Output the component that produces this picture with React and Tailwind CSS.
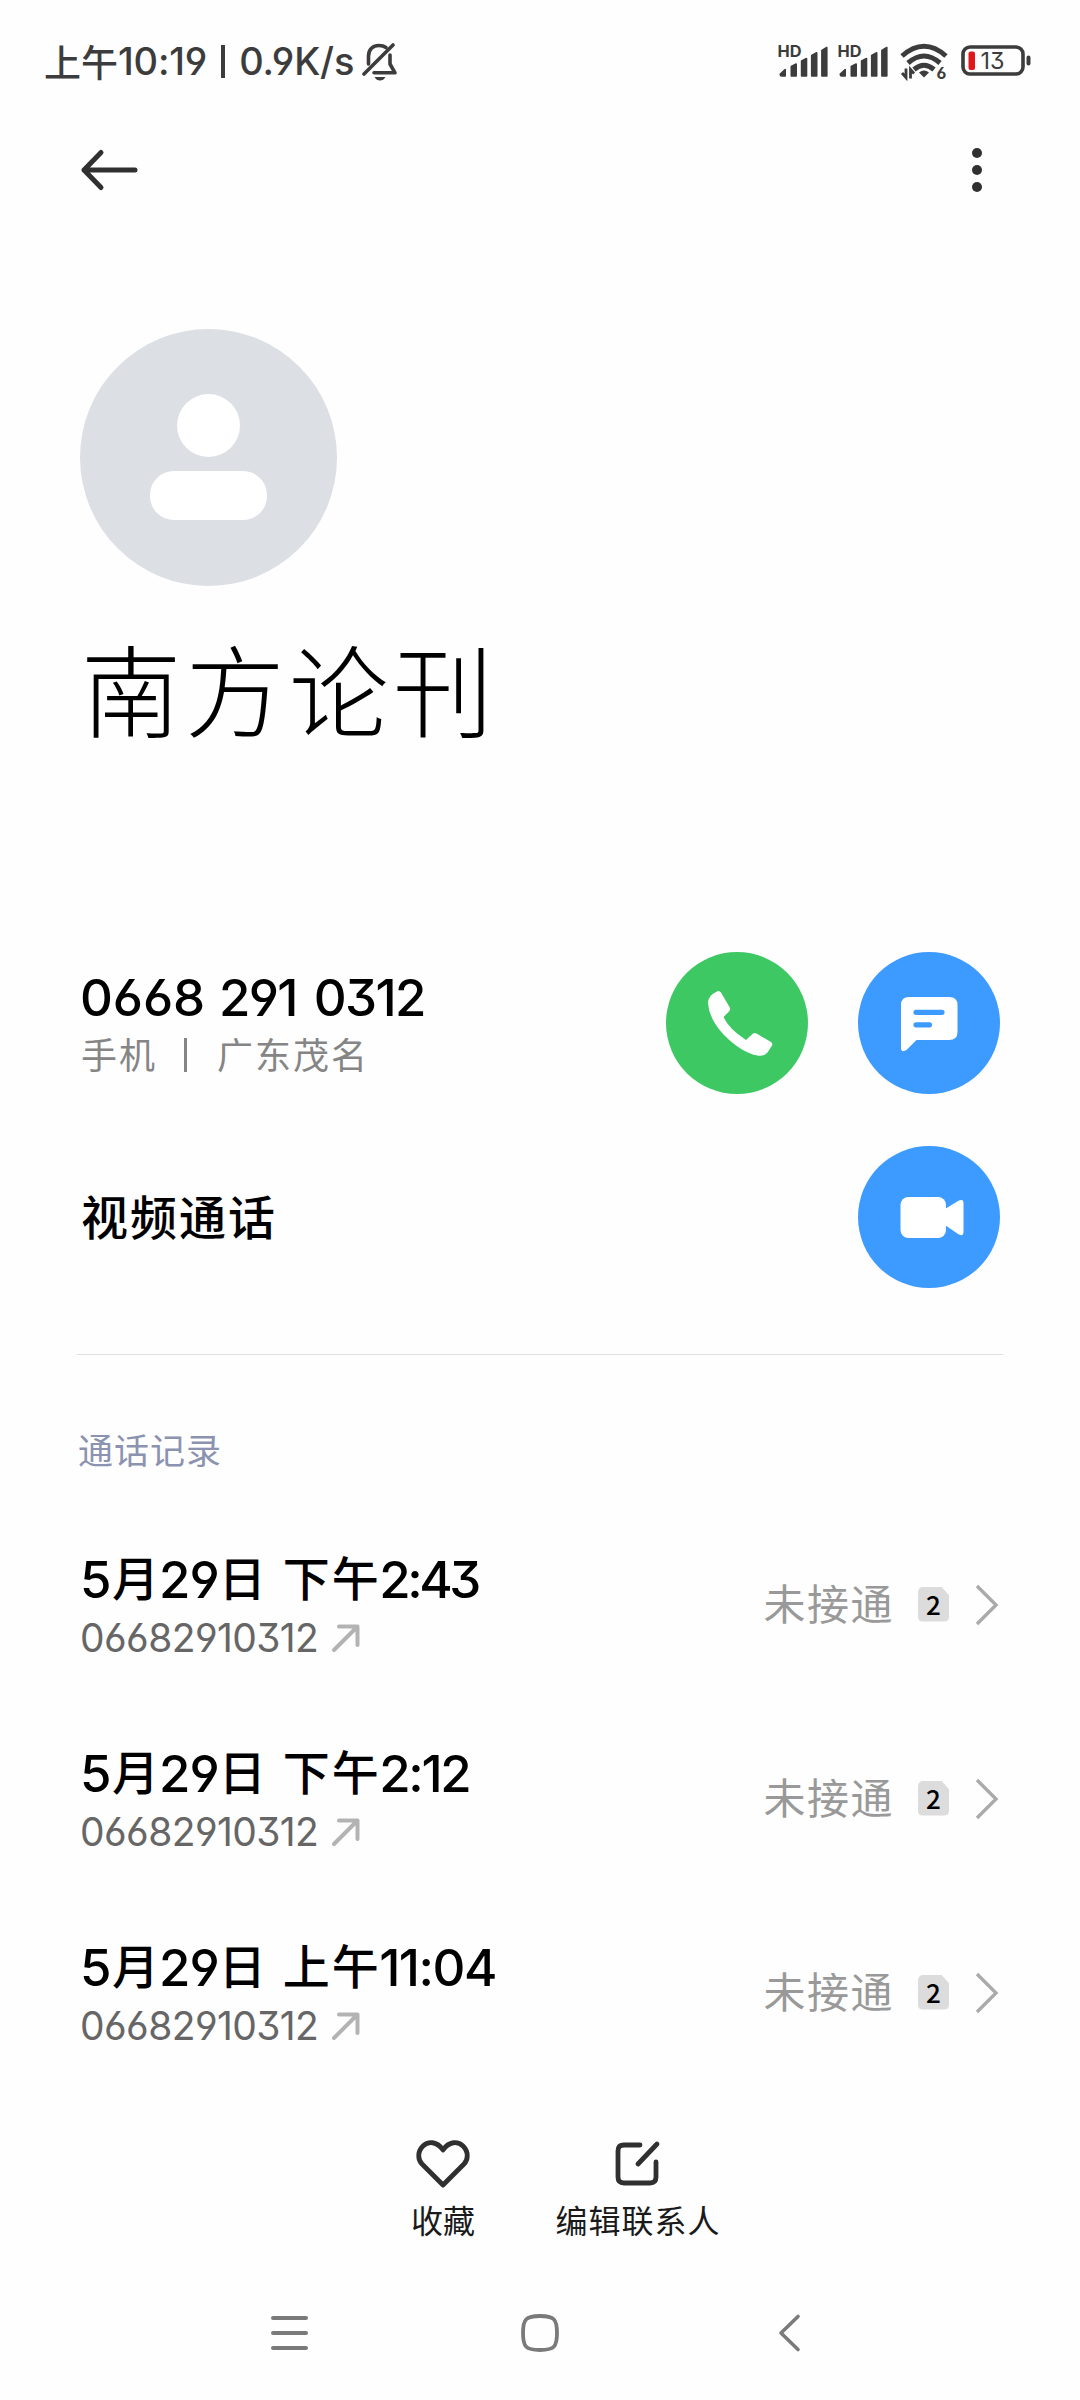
import React from "react";

const CJK = "font-['Noto_Sans_CJK_SC',sans-serif]";
const NUM = "font-['Inter','Noto_Sans_CJK_SC',sans-serif] [font-feature-settings:'cv03','cv04','cv09']";

const calls = [
  { period: "下午", time: "2:43", spacing: "tracking-[-3.400px]" },
  { period: "下午", time: "2:12", spacing: "tracking-[-2.300px]" },
  { period: "上午", time: "11:04", spacing: "tracking-[-1.500px]" },
];

function Signal() {
  return (
    <svg className="overflow-visible" width="52" height="34" viewBox="0 0 52 34" fill="#3c3c3c" stroke="#3c3c3c" strokeWidth="1.600" strokeLinejoin="round">
      <text x="-0.500" y="12.800" fontSize="15.500" fontWeight="700" fontFamily="Inter, sans-serif" textLength="24" lengthAdjust="spacingAndGlyphs" stroke="none">HD</text>
      <path d="M2.300 30 L7.200 25.500 V32 H3.500 Q2.300 32 2.300 30Z" />
      <path d="M13.300 22.500 L18.200 20 V32 H13.300Z" />
      <path d="M23.600 17 L28.500 14.500 V32 H23.600Z" />
      <path d="M33.700 11.500 L38.700 8.800 V32 H33.700Z" />
      <path d="M43.900 6.500 L48.800 3.500 V32 H43.900Z" />
    </svg>
  );
}

function StatusBar() {
  return (
    <header className="flex h-[122px] items-center justify-between pl-[44px] pr-[49px] text-[#3c3c3c]">
      <div className="flex h-[46px] items-center whitespace-nowrap leading-none">
        <span className={`${CJK} text-[37px] font-medium`}>上午</span>
        <span className={`${NUM} text-[38px] font-medium tracking-[-0.200px]`}>10:19</span>
        <span className="ml-[14px] mr-[14px] h-[33px] w-[4px] bg-[#3c3c3c]" />
        <span className={`${NUM} text-[38px] font-medium tracking-[-0.200px]`}>0.9K/s</span>
        <svg className="ml-[8px]" width="36" height="40" viewBox="0 0 36 40" fill="none" stroke="#3c3c3c" strokeWidth="3.600" strokeLinecap="round" strokeLinejoin="round">
          <path d="M2 33 L31 4" />
          <path d="M6.500 23 V15 C6.500 8.500 11 4.500 17 4.500 C20 4.500 22 5 24 6.500" />
          <path d="M28 14 V23 L33 31.800 H12" />
          <path d="M12.500 36 H23.500 Q21.500 39.500 18 39.500 Q14.500 39.500 12.500 36Z" fill="#3c3c3c" stroke="none" />
        </svg>
      </div>
      <div className="flex items-center">
        <Signal />
        <div className="ml-[8px]"><Signal /></div>
        <svg className="ml-[10px] overflow-visible" width="50" height="38" viewBox="0 0 50 38" fill="none" stroke="#3c3c3c" strokeWidth="5">
          <path d="M2 14 Q24 -5.500 46 14" />
          <path d="M8 21 Q24 7 40 21" />
          <path d="M14 27.500 Q24 19 34 27.500" />
          <path d="M19 30.500 Q24 26.500 29 30.500 L24 35.500Z" fill="#3c3c3c" stroke="none" />
          <path d="M6 26.500 V35.500 L2 31 M10.500 36.500 V27.500 L14 31.500" strokeWidth="2.800" />
          <text x="36.500" y="36.500" fontSize="16" fontWeight="700" fontFamily="Inter, sans-serif" fill="#3c3c3c" stroke="none" style={{ fontFeatureSettings: "'cv03'" }}>6</text>
        </svg>
        <svg className="ml-[11px]" width="70" height="32" viewBox="0 0 70 32" fill="none">
          <rect x="2" y="2" width="60" height="27" rx="7" stroke="#3c3c3c" strokeWidth="3.600" />
          <rect x="7.500" y="6.500" width="6.500" height="18.500" rx="2" fill="#e0161b" />
          <rect x="65.500" y="10.500" width="4" height="10" rx="2" fill="#3c3c3c" />
          <text x="19.500" y="24.200" fontSize="23.500" fontFamily="Inter, sans-serif" textLength="24" lengthAdjust="spacingAndGlyphs" fill="#3c3c3c" style={{ fontFeatureSettings: "'cv09'" }}>13</text>
        </svg>
      </div>
    </header>
  );
}

function Toolbar() {
  return (
    <div className="flex h-[96px] items-center justify-between pl-[80px] pr-[97px]">
      <svg width="60" height="44" viewBox="0 0 60 44" fill="none" stroke="#303030" strokeWidth="5" strokeLinecap="round" strokeLinejoin="round">
        <path d="M55 22 H4 M21 4.500 L4 22 L21 39.500" />
      </svg>
      <svg width="12" height="46" viewBox="0 0 12 46" fill="#303030">
        <circle cx="6" cy="6" r="5" />
        <circle cx="6" cy="23" r="5" />
        <circle cx="6" cy="40" r="5" />
      </svg>
    </div>
  );
}

function Profile() {
  return (
    <section className="h-[622px] pl-[80px] pt-[111px]">
      <div className="flex h-[257px] w-[257px] flex-col items-center rounded-full bg-[#dcdfe4] pt-[65px]">
        <div className="h-[63px] w-[63px] rounded-full bg-white" />
        <div className="mt-[14px] h-[49px] w-[117px] rounded-[24px] bg-white" />
      </div>
      <h1 className={`${CJK} ml-px mt-[41px] h-[120px] whitespace-nowrap text-[100px] font-light leading-[120px] tracking-[4px] text-black`}>南方论刊</h1>
    </section>
  );
}

function Round({ className, children }) {
  return (
    <button className={`flex h-[142px] w-[142px] items-center justify-center rounded-full ${className}`}>
      <svg width="142" height="142" viewBox="0 0 142 142" fill="#fff">{children}</svg>
    </button>
  );
}

function Actions() {
  return (
    <section className="flex flex-col gap-[52px] pl-[81px] pr-[80px] pt-[112px]">
      <div className="flex h-[142px] items-start">
        <div className="flex-1 whitespace-nowrap pt-[16px]">
          <div className={`${NUM} -ml-px flex h-[60px] text-[51px] font-medium leading-[60px] text-black`}>
            <span className="tracking-[-0.100px]">0668</span>
            <span className="ml-[14px] tracking-[-1.700px]">291</span>
            <span className="ml-[17px] tracking-[-1.700px]">0312</span>
          </div>
          <div className={`${CJK} -mt-[3px] flex h-[56px] items-center text-[36px] leading-[56px] tracking-[2px] text-[#858585]`}>
            <span>手机</span>
            <span className="ml-[27px] mr-[30px] mt-[4px] h-[34px] w-[3px] bg-[#858585]" />
            <span>广东茂名</span>
          </div>
        </div>
        <Round className="bg-[#3dc864]">
          <path d="M51 39.500 Q53 38 55 40.500 L64 56 Q64.500 58 63 59.500 L57.500 65 Q63 77 80 88 L87 81.500 Q88.500 80.500 90.500 81.500 L105 90 Q107 91.500 106 93.500 L101.500 100.500 Q98 104.500 91.500 103.500 Q76 101 58 83 Q43 67 42 51 Q42 47.500 44.500 44 Q47 41 51 39.500Z" />
        </Round>
        <Round className="ml-[50px] bg-[#3d9aff]">
          <path d="M51 45 H91 Q99.500 45 99.500 53 V80 Q99.500 88 91 88 H58.500 L48.500 98 Q43 101 43 96 V53 Q43 45 51 45Z" />
          <path d="M58 60.300 H84 M58 72.800 H71.500" stroke="#3d9aff" strokeWidth="5.200" strokeLinecap="round" />
        </Round>
      </div>
      <div className="flex h-[142px] items-center justify-between">
        <span className={`${CJK} mb-[6px] text-[47px] font-medium leading-none tracking-[2px] text-black`}>视频通话</span>
        <Round className="bg-[#3d9aff]">
          <rect x="42.500" y="51" width="45.500" height="41" rx="8" />
          <path d="M87 63 L100 55 Q105.500 52.500 105.500 57 V86 Q105.500 91 100 88 L87 79Z" />
        </Round>
      </div>
    </section>
  );
}

function CallRow({ period, time, spacing }) {
  return (
    <li className="flex h-[194px] items-center justify-between pl-[80px] pr-[80px]">
      <div className="whitespace-nowrap pt-[4px]">
        <div className="flex h-[62px] items-center text-black">
          <span className={`${NUM} pt-[2px] text-[51px] font-medium tracking-[-1px]`}>5</span>
          <span className={`${CJK} mb-[6px] ml-[1.500px] text-[47px] font-medium`}>月</span>
          <span className={`${NUM} pt-[2px] text-[51px] font-medium tracking-[-1px]`}>29</span>
          <span className={`${CJK} mb-[6px] text-[47px] font-medium`}>日</span>
          <span className={`${CJK} mb-[6px] ml-[17px] text-[47px] font-medium tracking-[2px]`}>{period}</span>
          <span className={`${NUM} -ml-[1.500px] pt-[2px] text-[51px] font-medium ${spacing}`}>{time}</span>
        </div>
        <div className="flex h-[54px] items-center pt-[2px]">
          <span className={`${NUM} text-[39px] font-[370] tracking-[-0.600px] text-[#666]`}>06682910312</span>
          <svg className="ml-[13px]" width="30" height="30" viewBox="0 0 30 30" fill="none" stroke="#b3b3b3" strokeWidth="4" strokeLinecap="round" strokeLinejoin="round">
            <path d="M3 27 L26 4 M8 3.500 H26.500 V22" />
          </svg>
        </div>
      </div>
      <div className="flex items-center pt-[2px]">
        <span className={`${CJK} mb-[6px] text-[42px] leading-none tracking-[1.500px] text-[#999]`}>未接通</span>
        <span className="mb-[2px] ml-[24px] flex h-[35px] w-[31px] items-center justify-center rounded-[5px] bg-[#dcdcdc] text-[26px] leading-none text-black [clip-path:polygon(0_0,75%_0,100%_25%,100%_100%,0_100%)]">
          <span className={`${CJK} mb-px font-medium`}>2</span>
        </span>
        <svg className="ml-[26px] mr-px" width="24" height="42" viewBox="0 0 24 42" fill="none" stroke="#aaa" strokeWidth="3.400">
          <path d="M2 2 L21 21 L2 40" />
        </svg>
      </div>
    </li>
  );
}

function BottomBar() {
  return (
    <footer className="flex h-[173px] justify-start pl-[410px]">
      <div className="flex w-[66px] flex-col items-center">
        <svg width="56" height="50" viewBox="0 0 56 50" fill="none" stroke="#303030" strokeWidth="4.800" strokeLinejoin="round">
          <path d="M28 11 C22 2 13 2 8 7 C2 13 3 21 7 25 L28 46 L49 25 C53 21 54 13 48 7 C43 2 34 2 28 11Z" />
        </svg>
        <span className={`${CJK} mt-[8px] whitespace-nowrap text-[32px] leading-[44px] text-[#1a1a1a]`}>收藏</span>
      </div>
      <div className="ml-[80px] flex w-[164px] flex-col items-center">
        <svg width="50" height="50" viewBox="0 0 50 50" fill="none" stroke="#303030" strokeWidth="4.800" strokeLinecap="round" strokeLinejoin="round">
          <path d="M27 6 H11 Q5 6 5 12 V38 Q5 44 11 44 H37 Q43 44 43 38 V23 M25 25 L44 5" />
        </svg>
        <span className={`${CJK} mt-[8px] whitespace-nowrap text-[32px] leading-[44px] tracking-[1px] text-[#1a1a1a]`}>编辑联系人</span>
      </div>
    </footer>
  );
}

function NavBar() {
  return (
    <nav className="flex h-[82px] shrink-0 items-start pl-[269px]">
      <svg width="41" height="42" viewBox="0 0 41 42" stroke="#7a7a7a" strokeWidth="4" strokeLinecap="round">
        <path d="M4 6 H37 M4 21 H37 M4 36 H37" />
      </svg>
      <svg className="ml-[209px]" width="42" height="42" viewBox="0 0 42 42" fill="none" stroke="#7a7a7a" strokeWidth="3.800">
        <path d="M21 4 C35 4 38 7 38 21 C38 35 35 38 21 38 C7 38 4 35 4 21 C4 7 7 4 21 4Z" />
      </svg>
      <svg className="ml-[216px]" width="24" height="42" viewBox="0 0 24 42" fill="none" stroke="#7a7a7a" strokeWidth="3.600" strokeLinecap="round" strokeLinejoin="round">
        <path d="M21 4.500 L4 21 L21 37.500" />
      </svg>
    </nav>
  );
}

export default function App() {
  return (
    <div className="flex h-[2400px] w-[1080px] flex-col overflow-hidden bg-[#fefefe]">
      <StatusBar />
      <Toolbar />
      <Profile />
      <Actions />
      <hr className="mx-[77px] mt-[66px] h-px shrink-0 border-0 bg-[#e0e0e0]" />
      <h2 className={`${CJK} mt-[69px] h-[50px] shrink-0 pl-[78px] text-[35px] leading-[50px] tracking-[1px] text-[#8c93b0]`}>通话记录</h2>
      <ul className="mt-[33px] h-[582px] shrink-0">
        {calls.map((c) => (
          <CallRow key={c.period + c.time} {...c} />
        ))}
      </ul>
      <div className="mt-[50px]"><BottomBar /></div>
      <NavBar />
    </div>
  );
}
